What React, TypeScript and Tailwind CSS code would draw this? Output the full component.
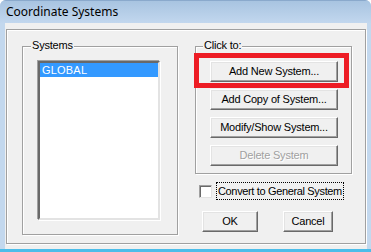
import React from "react";

function Btn({label, disabled, className}: {label: string; disabled?: boolean; className?: string}) {
    return (
        <div className={`h-[21px] flex items-center justify-center bg-[#f0f0f0] border border-t-white border-l-white border-r-[#696969] border-b-[#696969] shadow-[inset_-1px_-1px_0_#a0a0a0,inset_1px_1px_0_#e3e3e3] ${className ?? ""}`}>
            <span className={disabled ? "text-[#a0a0a0] [text-shadow:1px_1px_0_#fff]" : "text-black"}>{label}</span>
        </div>
    );
}

export default function App() {
    return (
        <div className="w-[371px] h-[252px] flex flex-col bg-[#c3d8ee] rounded-t-[6px] overflow-hidden font-['Liberation_Sans',Arial,sans-serif] text-[11px] tracking-[-0.2px] leading-none">
            <div className="h-[23px] shrink-0 flex items-center pl-[6px] bg-gradient-to-b from-[#a8c4e1] to-[#c2d7ee] border-t border-[#8aa9cc] font-['Noto_Sans',sans-serif] text-[12px] tracking-normal text-black">
                Coordinate Systems
            </div>

            <div className="flex-1 flex ml-[5px] mr-[4px] bg-[#f0f0f0]">
                <div className="ml-[1px] mt-[6px] w-[360px] h-[215px] border border-[#a0a0a0] shadow-[inset_1px_1px_0_#fff,1px_1px_0_#fff] flex pl-[15px] pt-[16px] gap-[17px]">

                    {/* Systems */}
                    <div className="relative w-[156px] h-[189px] border border-[#a0a0a0] shadow-[inset_1px_1px_0_#fff,1px_1px_0_#fff] pl-[15px] pt-[14px]">
                        <span className="absolute -top-[7px] left-[8px] px-[1px] bg-[#f0f0f0]">Systems</span>
                        <div className="w-[122px] h-[159px] bg-white border-2 border-t-[#696969] border-l-[#696969] border-r-[#e3e3e3] border-b-[#e3e3e3] shadow-[-1px_-1px_0_#a0a0a0,1px_1px_0_#fff]">
                            <div className="h-[14px] bg-[#3399ff] text-white flex items-center pl-[2px] tracking-[0.2px]">GLOBAL</div>
                        </div>
                    </div>

                    <div className="flex flex-col">
                        {/* Click to */}
                        <div className="relative w-[157px] h-[128px] border border-[#a0a0a0] shadow-[inset_1px_1px_0_#fff,1px_1px_0_#fff] pl-[14px] pt-[14px] flex flex-col gap-[7px]">
                            <span className="absolute -top-[7px] left-[7px] px-[1px] bg-[#f0f0f0]">Click to:</span>
                            <Btn label="Add New System..." className="w-[128px]"/>
                            <Btn label="Add Copy of System..." className="w-[128px]"/>
                            <Btn label="Modify/Show System..." className="w-[128px]"/>
                            <Btn label="Delete System" disabled className="w-[128px]"/>
                            <div className="absolute left-[-2px] top-[6px] w-[155px] h-[35px] border-[5px] border-[#ed1c24]"></div>
                        </div>

                        <div className="mt-[8px] h-[18px] flex items-center">
                            <div className="ml-[4px] w-[13px] h-[13px] bg-white border border-t-[#a0a0a0] border-l-[#a0a0a0] border-r-[#e3e3e3] border-b-[#e3e3e3] shadow-[inset_1px_1px_0_#696969]"></div>
                            <div className="ml-[4px] h-[18px] px-[1px] flex items-center border border-dotted border-black tracking-[-0.35px]">Convert to General System</div>
                        </div>

                        <div className="mt-[11px] flex">
                            <Btn label="OK" className="ml-[7px] w-[56px]"/>
                            <Btn label="Cancel" className="ml-[25px] w-[50px]"/>
                        </div>
                    </div>
                </div>
            </div>

            <div className="h-[3px] shrink-0 bg-[#4cbde9]"></div>
        </div>
    );
}
